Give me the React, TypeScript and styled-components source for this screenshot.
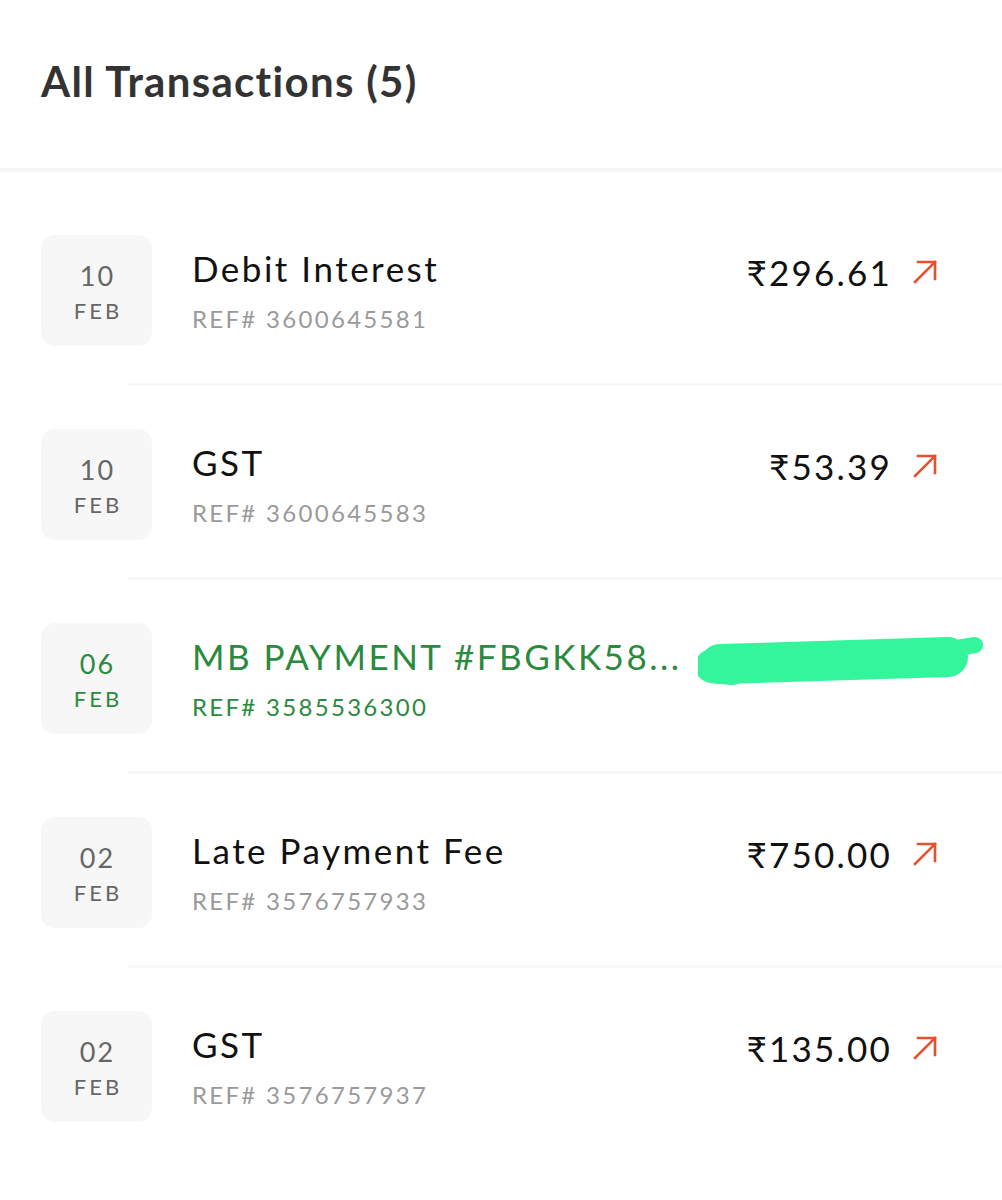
import styled, { createGlobalStyle } from 'styled-components';

const GlobalStyle = createGlobalStyle`
  body {
    margin: 0;
    background: #fff;
    font-family: Lato, "Open Sans", sans-serif;
  }
`;

const Page = styled.div`
  width: 1002px;
  min-height: 1200px;
  background: #fff;
`;

const Header = styled.header`
  padding: 56px 0 62px 41px;
  border-bottom: 4px solid #f7f7f7;
`;

const Title = styled.h1`
  margin: 0;
  font-size: 42px;
  line-height: 50px;
  font-weight: 700;
  color: #333;
  letter-spacing: 1.3px;
`;

const List = styled.div`
  padding-top: 20px;
`;

const Row = styled.div`
  position: relative;
  display: flex;
  align-items: flex-start;
  padding: 43px 64px 37px 41px;
`;

const Divider = styled.div`
  margin-left: 128px;
  height: 3px;
  background: #f7f7f7;
`;

const DateBox = styled.div<{ $green?: boolean }>`
  width: 111px;
  height: 111px;
  flex-shrink: 0;
  border-radius: 14px;
  background: #f7f7f7;
  display: flex;
  flex-direction: column;
  align-items: center;
  justify-content: center;
  padding-top: 2px;
  box-sizing: border-box;
  color: ${(p) => (p.$green ? '#2b8a3e' : '#666')};
`;

const Day = styled.div`
  font-size: 27px;
  line-height: 32px;
  letter-spacing: 2px;
  margin-left: 2px;
`;

const Month = styled.div`
  margin-top: 6px;
  margin-left: 3px;
  font-size: 22px;
  line-height: 26px;
  letter-spacing: 3px;
`;

const Info = styled.div`
  flex: 1;
  margin-left: 40px;
  padding-top: 12px;
`;

const Name = styled.div<{ $green?: boolean }>`
  font-size: 35px;
  line-height: 42px;
  letter-spacing: 2.5px;
  color: ${(p) => (p.$green ? '#2b8a3e' : '#111')};
  white-space: nowrap;
`;

const Ref = styled.div<{ $green?: boolean }>`
  margin-top: 15px;
  font-size: 24px;
  line-height: 29px;
  letter-spacing: 2.3px;
  color: ${(p) => (p.$green ? '#2b8a3e' : '#9a9a9a')};
`;

const Amount = styled.div`
  display: flex;
  align-items: center;
  padding-top: 16px;
  font-size: 35px;
  line-height: 42px;
  letter-spacing: 2.2px;
  color: #111;
`;

const Arrow = styled.svg`
  margin-left: 20px;
  width: 26px;
  height: 26px;
`;

const Scribble = styled.svg`
  position: absolute;
  left: 698px;
  top: 54px;
  width: 290px;
  height: 54px;
`;

type Txn = {
  day: string;
  month: string;
  name: string;
  ref: string;
  amount?: string;
  credit?: boolean;
};

const txns: Txn[] = [
  { day: '10', month: 'FEB', name: 'Debit Interest', ref: '3600645581', amount: '₹296.61' },
  { day: '10', month: 'FEB', name: 'GST', ref: '3600645583', amount: '₹53.39' },
  { day: '06', month: 'FEB', name: 'MB PAYMENT #FBGKK58...', ref: '3585536300', credit: true },
  { day: '02', month: 'FEB', name: 'Late Payment Fee', ref: '3576757933', amount: '₹750.00' },
  { day: '02', month: 'FEB', name: 'GST', ref: '3576757937', amount: '₹135.00' },
];

function ArrowUpRight() {
  return (
    <Arrow viewBox="0 0 26 26" fill="none" stroke="#e4512f" strokeWidth="2.6" strokeLinecap="square">
      <path d="M3 23 L23 3" />
      <path d="M6 3 H23 V20" />
    </Arrow>
  );
}

export default function App() {
  return (
    <Page>
      <GlobalStyle />
      <Header>
        <Title>All Transactions (5)</Title>
      </Header>
      <List>
        {txns.map((t, i) => (
          <div key={t.ref}>
            <Row>
              <DateBox $green={t.credit}>
                <Day>{t.day}</Day>
                <Month>{t.month}</Month>
              </DateBox>
              <Info>
                <Name $green={t.credit}>{t.name}</Name>
                <Ref $green={t.credit}>REF# {t.ref}</Ref>
              </Info>
              {t.amount && (
                <Amount>
                  {t.amount}
                  <ArrowUpRight />
                </Amount>
              )}
              {t.credit && (
                <Scribble viewBox="0 0 290 54" fill="none" stroke="#34f59b" strokeLinecap="round" strokeLinejoin="round">
                  <path d="M22 30 L250 23" strokeWidth="40" />
                  <path d="M14 32 L34 34" strokeWidth="34" />
                  <path d="M235 18 L277 11" strokeWidth="16" />
                </Scribble>
              )}
            </Row>
            {i < txns.length - 1 && <Divider />}
          </div>
        ))}
      </List>
    </Page>
  );
}
